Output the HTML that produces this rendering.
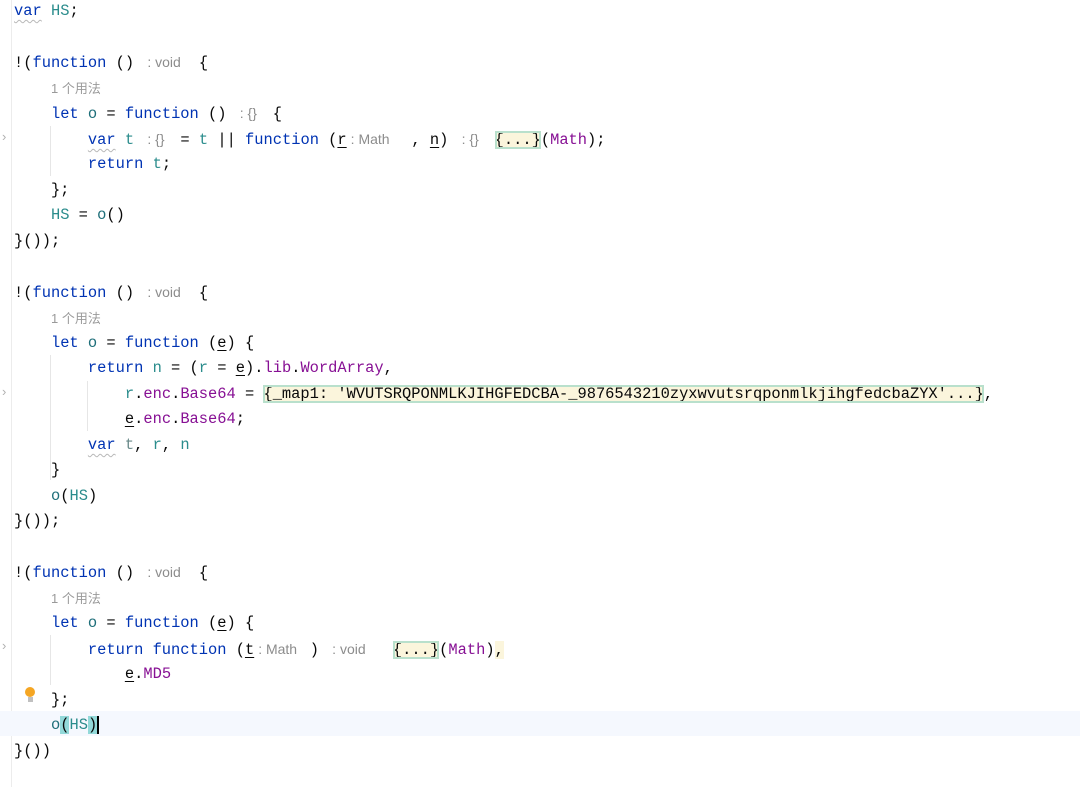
<!DOCTYPE html>
<html><head><meta charset="utf-8"><style>
body{margin:0;width:1080px;height:787px;background:#fff;position:relative;overflow:hidden}
.l{position:absolute;left:14px;height:25px;line-height:25px;font-family:"Liberation Mono",monospace;font-size:15.4px;color:#080808;white-space:pre;margin-top:2px}
.k{color:#0033b3}.v{color:#2a8c8c}.p{color:#871094}.pm{color:#1f6f7a}
.h{display:inline-block;font-family:"Liberation Sans",sans-serif;font-size:14px;color:#8c8c8c;padding-left:4px;box-sizing:border-box}
.u{text-decoration:underline;text-underline-offset:3px}
.w{text-decoration:underline wavy #b8b8b8;text-underline-offset:4px;text-decoration-thickness:1px}
.f{background:#fbf5dc;outline:2px solid #b9e0cc;outline-offset:-2px}
.c{position:absolute;left:51px;font-family:"Liberation Sans","Noto Sans CJK SC",sans-serif;font-size:13px;color:#9a9a9a;height:25px;line-height:25px;margin-top:2px}
.g{position:absolute;width:1px;background:#e6e6e6}
.ar{position:absolute;left:2px;color:#b0b0b0;font-family:"Liberation Sans",sans-serif;font-size:13px}
</style></head><body>
<div class="g" style="left:11px;top:0;height:787px;background:#ececec"></div>
<div style="position:absolute;left:0;top:711px;width:1080px;height:25px;background:#f5f8fe"></div>
<div class="g" style="left:50px;top:126px;height:50px"></div>
<div class="g" style="left:50px;top:355px;height:125px"></div>
<div class="g" style="left:87px;top:381px;height:50px"></div>
<div class="g" style="left:50px;top:635px;height:50px"></div>
<div class="ar" style="top:129px">›</div>
<div class="ar" style="top:384px">›</div>
<div class="ar" style="top:638px">›</div>

<div class="l" style="top:-3px"><span class="k w">var</span> <span class="v">HS</span>;</div>

<div class="l" style="top:48px">!(<span class="k">function</span> () <span class="h" style="width:55.5px">: void</span>{</div>
<div class="c" style="top:74px">1 个用法</div>
<div class="l" style="top:99px">    <span class="k">let</span> <span class="pm">o</span> = <span class="k">function</span> () <span class="h" style="width:37px">: {}</span>{</div>
<div class="l" style="top:125px">        <span class="k w">var</span> <span class="v">t</span> <span class="h" style="width:37px">: {}</span>= <span class="v">t</span> || <span class="k">function</span> (<span class="u">r</span><span class="h" style="width:64.75px">: Math</span>, <span class="u">n</span>) <span class="h" style="width:37px">: {}</span><span class="f">{...}</span>(<span class="p">Math</span>);</div>
<div class="l" style="top:150px">        <span class="k">return</span> <span class="v">t</span>;</div>
<div class="l" style="top:176px">    };</div>
<div class="l" style="top:201px">    <span class="v">HS</span> = <span class="pm">o</span>()</div>
<div class="l" style="top:227px">}());</div>

<div class="l" style="top:278px">!(<span class="k">function</span> () <span class="h" style="width:55.5px">: void</span>{</div>
<div class="c" style="top:304px">1 个用法</div>
<div class="l" style="top:329px">    <span class="k">let</span> <span class="pm">o</span> = <span class="k">function</span> (<span class="u">e</span>) {</div>
<div class="l" style="top:354px">        <span class="k">return</span> <span class="v">n</span> = (<span class="v">r</span> = <span class="u">e</span>).<span class="p">lib</span>.<span class="p">WordArray</span>,</div>
<div class="l" style="top:380px">            <span class="v">r</span>.<span class="p">enc</span>.<span class="p">Base64</span> = <span class="f">{_map1: 'WVUTSRQPONMLKJIHGFEDCBA-_9876543210zyxwvutsrqponmlkjihgfedcbaZYX'...}</span>,</div>
<div class="l" style="top:405px">            <span class="u">e</span>.<span class="p">enc</span>.<span class="p">Base64</span>;</div>
<div class="l" style="top:431px">        <span class="k w">var</span> <span class="v" style="color:#6a8a8a">t</span>, <span class="v">r</span>, <span class="v">n</span></div>
<div class="l" style="top:456px">    }</div>
<div class="l" style="top:482px">    <span class="pm">o</span>(<span class="v">HS</span>)</div>
<div class="l" style="top:507px">}());</div>

<div class="l" style="top:558px">!(<span class="k">function</span> () <span class="h" style="width:55.5px">: void</span>{</div>
<div class="c" style="top:584px">1 个用法</div>
<div class="l" style="top:609px">    <span class="k">let</span> <span class="pm">o</span> = <span class="k">function</span> (<span class="u">e</span>) {</div>
<div class="l" style="top:635px">        <span class="k">return</span> <span class="k">function</span> (<span class="u">t</span><span class="h" style="width:55.5px">: Math</span>) <span class="h" style="width:64.75px">: void</span><span class="f">{...}</span>(<span class="p">Math</span>)<span style="background:#fbf5dc">,</span></div>
<div class="l" style="top:660px">            <span class="u">e</span>.<span class="p">MD5</span></div>
<div style="position:absolute;left:25px;top:687px;width:10px;height:10px;border-radius:50%;background:#f5a623"></div>
<div style="position:absolute;left:28px;top:697px;width:5px;height:5px;background:#c0c0c0"></div>
<div class="l" style="top:686px">    };</div>
<div class="l" style="top:711px">    <span class="pm">o</span><span style="background:#93d9d9">(</span><span class="v">HS</span><span style="background:#93d9d9">)</span><span style="border-left:2px solid #000"></span></div>
<div class="l" style="top:737px">}())</div>
</body></html>
